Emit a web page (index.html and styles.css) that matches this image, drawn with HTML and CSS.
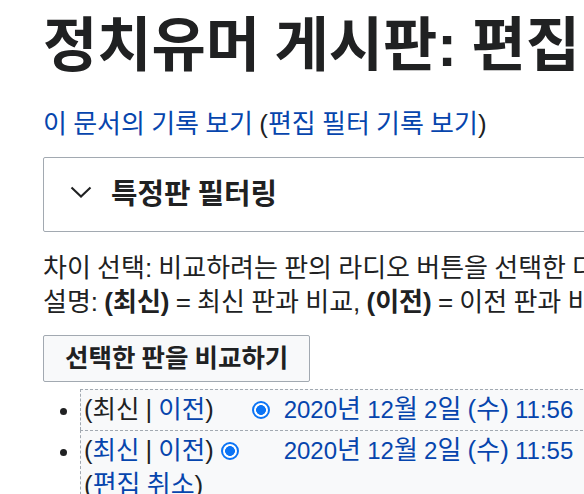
FILE: index.html
```html
<!DOCTYPE html>
<html lang="ko">
<head>
<meta charset="utf-8">
<title>정치유머 게시판: 편집 기록</title>
<link rel="stylesheet" href="styles.css">
</head>
<body>
<div class="page">
  <h1 class="title">정치유머 게시판: 편집 기록</h1>
  <div class="sub"><a href="#">이 문서의 기록 보기</a> (<a href="#">편집 필터 기록 보기</a>)</div>

  <div class="filter">
    <svg class="chev" width="22" height="12" viewBox="0 0 22 12" aria-hidden="true"><polyline points="1.5,1.5 11,10.5 20.5,1.5" fill="none" stroke="#202122" stroke-width="2.1"/></svg>
    <span class="filter-title">특정판 필터링</span>
  </div>

  <div class="help">
    <p>차이 선택: 비교하려는 판의 라디오 버튼을 선택한 다음 엔터를 누르거나 아래의 버튼을 누르세요.</p>
    <p>설명: <b>(최신)</b> = 최신 판과 비교, <b>(이전)</b> = 이전 판과 비교, <b>잔</b> = 사소한 편집</p>
  </div>

  <button class="compare" type="button">선택한 판을 비교하기</button>

  <ul class="history">
    <li class="row">
      <span class="links">(최신 | <a href="#">이전</a>)</span><input class="radio r1 hidden" type="radio" name="oldid"><input class="radio r2" type="radio" name="diff" checked><a href="#"><span class="n">2020</span>년 <span class="n">12</span>월 <span class="n">2</span>일 (수) <span class="n">11:56</span></a> <span class="rest">‎<a href="#">정치유머</a> (<a href="#">토론</a> | <a href="#">기여</a>) . . (2,481 바이트) (+36) . . (현재)</span>
    </li>
    <li class="row">
      <span class="links">(<a href="#">최신</a> | <a href="#">이전</a>)</span><input class="radio r1" type="radio" name="oldid" checked><input class="radio r2 hidden" type="radio" name="diff"><a href="#"><span class="n">2020</span>년 <span class="n">12</span>월 <span class="n">2</span>일 (수) <span class="n">11:55</span></a> <span class="rest">‎<a href="#">정치유머</a> (<a href="#">토론</a> | <a href="#">기여</a>) . . (2,445 바이트) (+2,445) . . (새 문서: 정치유머 게시판)</span>
      <span class="undo">(<a href="#">편집 취소</a>)</span>
    </li>
  </ul>
</div>
</body>
</html>
```

FILE: styles.css
```css
html, body {
  margin: 0;
  padding: 0;
  overflow: hidden;
  background: #ffffff;
}

body {
  font-family: "Liberation Sans", "Noto Sans CJK KR", sans-serif;
  font-size: 26px;
  line-height: 34px;
  word-spacing: -1px;
  color: #202122;
}

a {
  color: #0645ad;
  text-decoration: none;
}

.page {
  width: 1100px;
  padding-left: 43px;
}

.title {
  margin: 0;
  padding-top: 11px;
  font-size: 59px;
  line-height: 70px;
  font-weight: bold;
  word-spacing: -2px;
  white-space: nowrap;
  color: #202122;
}

.sub {
  margin-top: 26px;
  white-space: nowrap;
}

.filter {
  margin-top: 16px;
  border: 1px solid #a2a9b1;
  border-radius: 2px;
  padding: 19px 26px 20px;
  display: flex;
  align-items: center;
  gap: 19px;
}

.chev {
  flex: none;
  margin-top: -4px;
}

.filter-title {
  font-size: 28.8px;
  font-weight: bold;
  line-height: 34px;
  white-space: nowrap;
}

.help {
  margin-top: 19px;
}

.help p {
  margin: 0;
  white-space: nowrap;
}

.compare {
  display: block;
  margin-top: 16px;
  padding: 5px 21px 6px;
  font: bold 25.5px/34px "Liberation Sans", "Noto Sans CJK KR", sans-serif;
  word-spacing: -1px;
  color: #202122;
  background: #f8f9fa;
  border: 1px solid #a2a9b1;
  border-radius: 2px;
}

.history {
  margin: 7px 0 0;
  padding-left: 37px;
  list-style: disc;
}

.row {
  border-top: 1px dashed #a2a9b1;
  border-left: 1px dashed #a2a9b1;
  background: #f8f9fa;
  padding: 2px 3px 3px;
  white-space: nowrap;
}

.row::marker {
  font-size: 22px;
}

.links {
  font-size: 25.5px;
}

.n {
  font-size: 24px;
}

.rest {
  margin-left: 8px;
}

.radio {
  appearance: none;
  -webkit-appearance: none;
  box-sizing: border-box;
  width: 18px;
  height: 18px;
  margin: 0;
  border: 2px solid #0b74f5;
  border-radius: 50%;
  background: radial-gradient(circle, #0b74f5 0 4.6px, #ffffff 5.2px);
  vertical-align: -1px;
}

.r1 {
  margin-left: 7px;
}

.r2 {
  margin-left: 13px;
  margin-right: 14px;
}

.radio.hidden {
  visibility: hidden;
}

.undo {
  display: block;
}
```
